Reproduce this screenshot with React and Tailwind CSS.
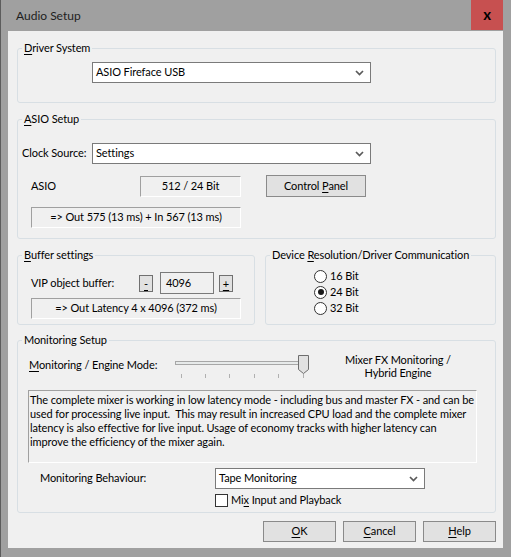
import React from "react";

const Chevron = () => (
  <svg width="9" height="6" viewBox="0 0 9 6" className="shrink-0">
    <path d="M1 1l3.5 3.5L8 1" fill="none" stroke="#5a5a5a" strokeWidth="1.7" />
  </svg>
);

const Combo = ({ value, className }) => (
  <div
    className={`flex h-[21px] items-center justify-between border border-[#7a7a7a] bg-white pl-[3px] pr-[6px] ${className}`}
  >
    <span>{value}</span>
    <Chevron />
  </div>
);

const Group = ({ label, className, children }) => (
  <fieldset className={`min-w-0 rounded-[3px] border border-[#d8dfe4] ${className}`}>
    <legend className="ml-[4px] px-[2px] leading-[16px]">{label}</legend>
    {children}
  </fieldset>
);

const Sunken = ({ className, children }) => (
  <div
    className={`flex items-center justify-center border-t border-l border-[#a0a0a0] border-r-white border-b-white border-r border-b ${className}`}
  >
    {children}
  </div>
);

const Button = ({ className, children }) => (
  <div
    className={`flex items-center justify-center border border-[#8a8a8a] bg-[#e1e1e1] ${className}`}
  >
    {children}
  </div>
);

const Radio = ({ label, checked }) => (
  <div className="flex h-4 items-center">
    <span className="flex h-[13px] w-[13px] items-center justify-center rounded-full border border-[#333] bg-white">
      {checked && <span className="h-[6px] w-[6px] rounded-full bg-[#1a1a1a]" />}
    </span>
    <span className="ml-[3px]">{label}</span>
  </div>
);

const Slider = () => (
  <svg width="134" height="26" className="shrink-0">
    <rect x="0.5" y="8.5" width="124" height="3" fill="#e7eaea" stroke="#a7a7a7" />
    <path d="M123.5 2.5h10v14l-5 4l-5-4z" fill="#e1e1e1" stroke="#6e6e6e" />
    {[6, 30, 54, 79, 103, 128].map((x) => (
      <line key={x} x1={x + 0.5} x2={x + 0.5} y1="21" y2="25" stroke="#b0b0b0" />
    ))}
  </svg>
);

const U = ({ children }) => <span className="underline underline-offset-2">{children}</span>;

export default function App() {
  return (
    <div className="flex h-[557px] w-[511px] flex-col whitespace-nowrap border-l border-[#5c5c5c] bg-[#a0a0a0] text-[11px] tracking-[-0.1px] text-black font-['Lato',sans-serif]">
      <div className="flex h-[31px] shrink-0 items-start justify-between">
        <div className="pl-[15px] pt-[7px] text-[12px] leading-[18px] tracking-normal text-[#1e1e1e]">Audio Setup</div>
        <div className="mr-[8px] flex h-[30px] w-[32px] items-center justify-center bg-[#c75050] pb-[2px] text-[15px] font-bold leading-none">
          x
        </div>
      </div>

      <div className="ml-[7px] flex h-[517px] w-[495px] flex-col bg-[#f0f0f0] pl-[9px] pr-[7px] pt-[9px]">
        <Group label={<><U>D</U>river System</>} className="pb-[19px]">
          <Combo value="ASIO Fireface USB" className="ml-[74px] mt-[6px] w-[279px]" />
        </Group>

        <Group label={<><U>A</U>SIO Setup</>} className="mt-[8px] pb-[10px]">
          <div className="mt-[16px] flex h-[21px] items-center">
            <span className="ml-[4px] w-[70px]">Clock Source:</span>
            <Combo value="Settings" className="w-[279px]" />
          </div>
          <div className="mt-[11px] flex h-[22px] items-center">
            <span className="ml-[13px] w-[109px]">ASIO</span>
            <Sunken className="h-[21px] w-[101px]">512 / 24 Bit</Sunken>
            <Button className="ml-[25px] h-[22px] w-[100px]">
              <span>
                Control <U>P</U>anel
              </span>
            </Button>
          </div>
          <Sunken className="ml-[13px] mt-[10px] h-[21px] w-[210px]">
            =&gt; Out 575 (13 ms) + In 567 (13 ms)
          </Sunken>
        </Group>

        <div className="mt-[8px] flex">
          <Group label={<><U>B</U>uffer settings</>} className="w-[238px] pb-[5px]">
            <div className="mt-[9px] flex h-[22px] items-center">
              <span className="ml-[13px] w-[108px]">VIP object buffer:</span>
              <Button className="h-[17px] w-[14px] border-[#707070] leading-none">
                <U>-</U>
              </Button>
              <div className="ml-[7px] flex h-[22px] w-[54px] items-center border border-[#7a7a7a] bg-[#f0f0f0] pl-[5px]">
                4096
              </div>
              <Button className="ml-[5px] h-[17px] w-[14px] border-[#707070] leading-none">
                <U>+</U>
              </Button>
            </div>
            <Sunken className="ml-[13px] mt-[4px] h-[21px] w-[210px]">
              =&gt; Out Latency 4 x 4096 (372 ms)
            </Sunken>
          </Group>
          <Group
            label={<>Device <U>R</U>esolution/Driver Communication</>}
            className="ml-[10px] w-[231px] pb-[7px]"
          >
            <div className="ml-[48px] mt-[5px] flex flex-col">
              <Radio label="16 Bit" />
              <Radio label="24 Bit" checked />
              <Radio label="32 Bit" />
            </div>
          </Group>
        </div>

        <Group label="Monitoring Setup" className="mt-[7px] pb-[5px]">
          <div className="mt-[5px] flex h-[27px] items-start">
            <span className="ml-[11px] mt-[4px] w-[146px] leading-[16px]">
              <U>M</U>onitoring / Engine Mode:
            </span>
            <Slider />
            <div className="ml-[14px] w-[150px] text-center leading-[13px]">
              Mixer FX Monitoring /<br />
              Hybrid Engine
            </div>
          </div>
          <div className="ml-[10px] mt-[10px] h-[73px] w-[449px] overflow-hidden border-t border-l border-[#a0a0a0] border-r border-b border-r-white border-b-white pl-[1px] pt-[2px] leading-[14px] whitespace-pre">
            {"The complete mixer is working in low latency mode - including bus and master FX - and can be\nused for processing live input.  This may result in increased CPU load and the complete mixer\nlatency is also effective for live input. Usage of economy tracks with higher latency can\nimprove the efficiency of the mixer again."}
          </div>
          <div className="mt-[5px] flex h-[21px] items-center">
            <span className="ml-[22px] w-[175px]">Monitoring Behaviour:</span>
            <Combo value="Tape Monitoring" className="w-[210px]" />
          </div>
          <div className="ml-[197px] mt-[5px] flex h-[13px] items-center">
            <span className="h-[13px] w-[13px] border border-[#333] bg-white" />
            <span className="ml-[3px]">
              Mi<U>x</U> Input and Playback
            </span>
          </div>
        </Group>

        <div className="mt-[8px] flex justify-end gap-[7px]">
          <Button className="h-[21px] w-[73px]">
            <U>O</U>K
          </Button>
          <Button className="h-[21px] w-[73px]">
            <U>C</U>ancel
          </Button>
          <Button className="h-[21px] w-[73px]">
            <U>H</U>elp
          </Button>
        </div>
      </div>
    </div>
  );
}
